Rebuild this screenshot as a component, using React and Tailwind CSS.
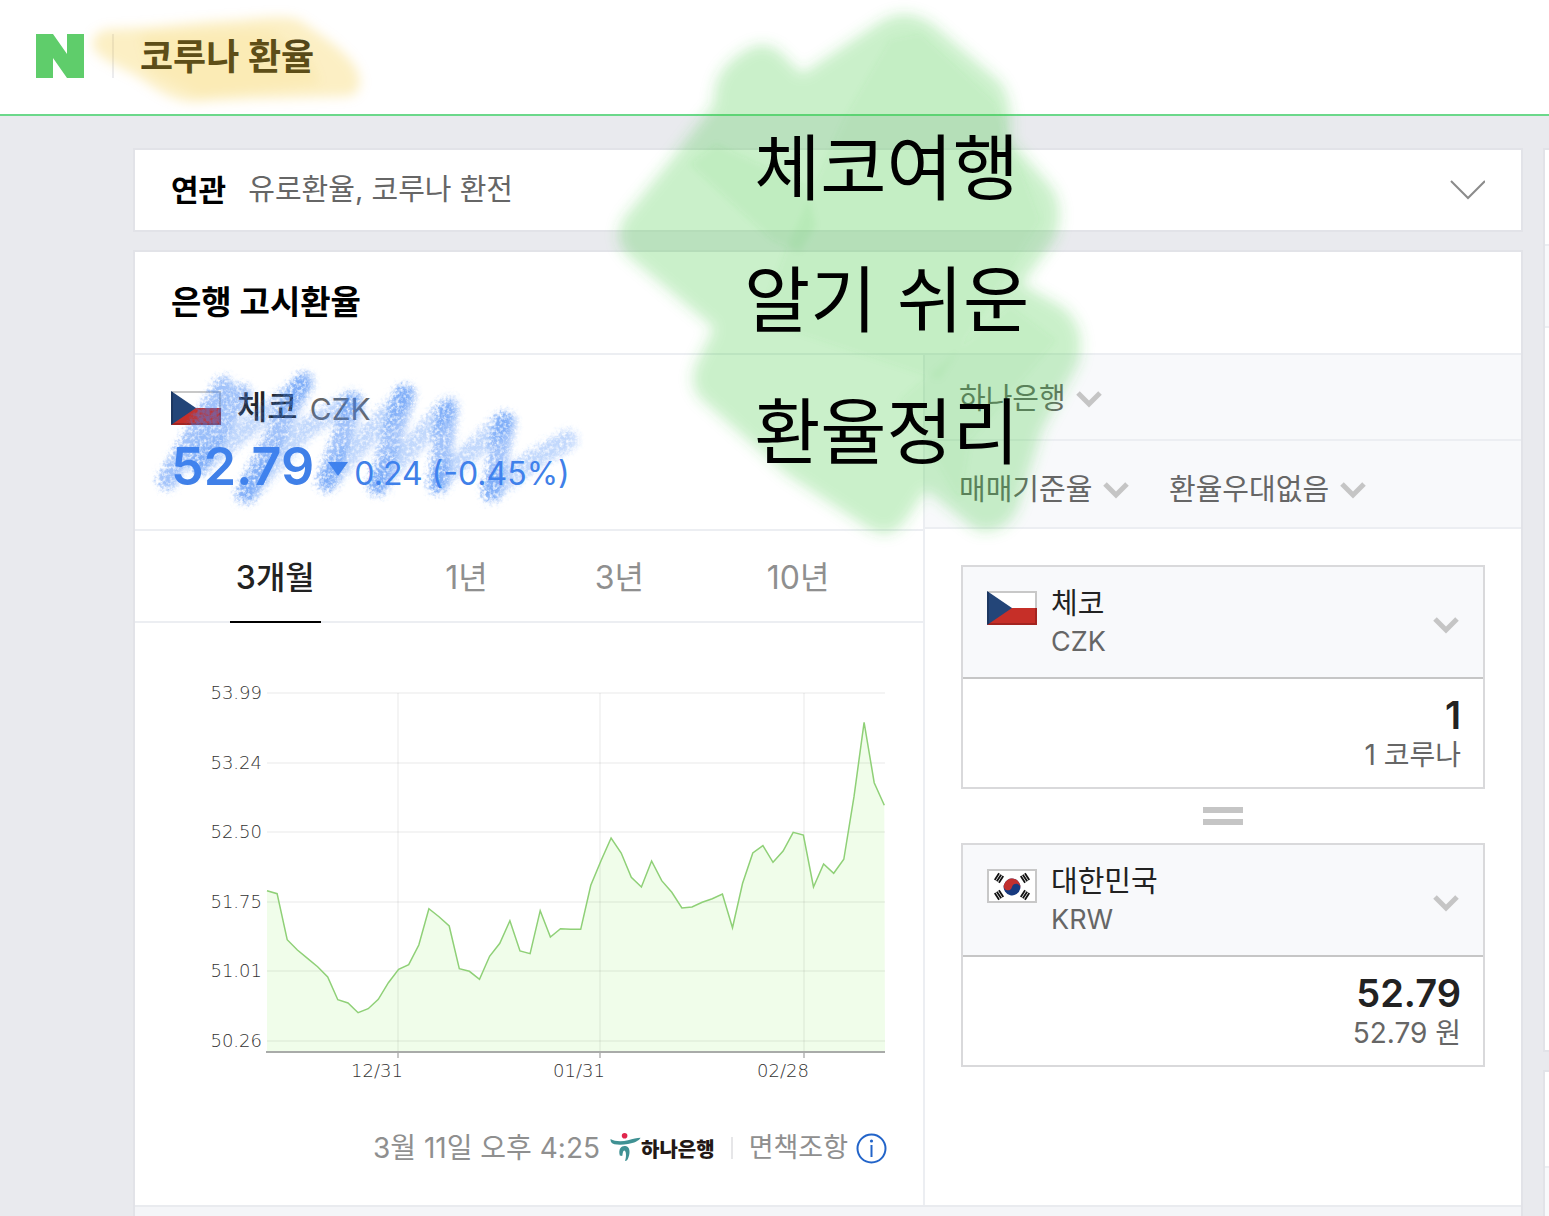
import React from "react";

const LEVELS = [
  662, 671, 809, 840, 865, 890, 921, 989, 999, 1028, 1016, 988, 938, 898, 884, 825, 716, 740, 768, 896, 904,
  928, 859, 820, 752, 843, 851, 722, 801, 776, 778, 778, 646, 572, 504, 549, 622, 651, 573, 632, 667, 714,
  711, 697, 686, 672, 773, 640, 549, 527, 577, 543, 487, 495, 651, 582, 610, 568, 380, 157, 338, 406,
];
const POINTS = LEVELS.map((v, i) => [132 + i * 10.12, 47 + v / 3]);
const LINE = POINTS.map(([x, y]) => `${x.toFixed(1)},${y.toFixed(1)}`).join(" ");

const Y_TICKS = [
  ["53.99", 70],
  ["53.24", 140],
  ["52.50", 209],
  ["51.75", 279],
  ["51.01", 348],
  ["50.26", 418],
];
const X_TICKS = [
  ["12/31", 263],
  ["01/31", 465],
  ["02/28", 669],
];

function NaverLogo() {
  return (
    <svg width="48" height="44" viewBox="0 0 48 44" aria-hidden="true">
      <polygon points="0,0 17,0 31,20 31,0 48,0 48,44 31,44 17,24 17,44 0,44" fill="#5fcd6b" />
    </svg>
  );
}

function Chevron() {
  return (
    <svg width="26" height="17" viewBox="0 0 26 17" aria-hidden="true" className="shrink-0">
      <path d="M2 2 L13 13 L24 2" fill="none" stroke="#c5c5c5" strokeWidth="5" />
    </svg>
  );
}

function CzechFlag() {
  return (
    <svg width="50" height="34" viewBox="0 0 50 34" role="img" aria-label="체코 국기" className="shrink-0">
      <rect width="50" height="34" fill="#fff" />
      <path d="M0 1H49V17" fill="none" stroke="#c8c8c8" strokeWidth="2" />
      <rect y="17" width="50" height="17" fill="#c62f28" />
      <path d="M0 33H49V17" fill="none" stroke="#a32420" strokeWidth="2" />
      <polygon points="0,0 25,17 0,34" fill="#234578" />
      <path d="M1 1V33" stroke="#1c3761" strokeWidth="2" />
    </svg>
  );
}

function Trigram({ x, y, angle }) {
  return (
    <g transform={`translate(${x} ${y}) rotate(${angle})`}>
      <rect x="-4" y="-3.4" width="8" height="1.8" fill="#111" />
      <rect x="-4" y="-0.9" width="8" height="1.8" fill="#111" />
      <rect x="-4" y="1.6" width="8" height="1.8" fill="#111" />
    </g>
  );
}

function KoreaFlag() {
  return (
    <svg width="50" height="34" viewBox="0 0 50 34" role="img" aria-label="대한민국 국기" className="shrink-0">
      <rect x="1" y="1" width="48" height="32" fill="#fff" stroke="#c8c8c8" strokeWidth="2" />
      <g transform="rotate(12 25 18)">
        <circle cx="25" cy="18" r="8.4" fill="#173a80" />
        <path d="M16.6 18a8.4 8.4 0 0 1 16.8 0a4.2 4.2 0 0 0 -8.4 0a4.2 4.2 0 0 1 -8.4 0z" fill="#c2302f" />
      </g>
      <Trigram x={12} y={9} angle={-57} />
      <Trigram x={38} y={9} angle={57} />
      <Trigram x={12} y={26} angle={57} />
      <Trigram x={38} y={26} angle={-57} />
    </svg>
  );
}

function HanaMark() {
  return (
    <svg width="31" height="30" viewBox="0 0 31 30" aria-hidden="true" className="shrink-0">
      <circle cx="14.6" cy="2.8" r="2.8" fill="#e0254c" />
      <path
        d="M0.5 6 C5 8.6 12 8.6 18 7.2 C23 6 27 4.8 30.5 4.8 C29 8 24 10 18 11 C11 12.4 3 12 1.4 9.6 C0.7 8.6 0.4 7.4 0.5 6z"
        fill="#3f9193"
      />
      <path
        d="M9.8 22.5 C8 15 12 12.4 15.4 13 C20.5 14 20 20 18.6 24 C17.6 27 16.6 28 15 28 C16.4 24 16.4 18.6 14.6 17.4 C12.6 17.4 12.8 21 12.2 23z"
        fill="#3f9193"
      />
    </svg>
  );
}

function InlineSelect({ label, value }) {
  return (
    <div className="flex items-center gap-2.5">
      <select
        aria-label={label}
        className="h-14 appearance-none bg-transparent text-[29px] text-[#666]"
        defaultValue={value}
      >
        <option>{value}</option>
      </select>
      <Chevron />
    </div>
  );
}

function CurrencyBox({ flag, country, code, amount, unit }) {
  return (
    <div className="border-2 border-[#d9d9db]">
      <button
        type="button"
        className="flex h-28 w-full items-start border-b-2 border-[#c6c6c6] bg-[#f8f9fb] px-6 pt-4 text-left"
      >
        <span className="pt-2">{flag}</span>
        <span className="ml-3.5 flex flex-1 flex-col pt-0.5">
          <span className="text-[29px] leading-[38px] text-[#222]">{country}</span>
          <span className="text-[27px] leading-[38px] text-[#666]">{code}</span>
        </span>
        <span className="mt-[34px]">
          <Chevron />
        </span>
      </button>
      <div className="flex h-[108px] flex-col items-end px-[22px] pt-4">
        <input
          type="text"
          aria-label={`${country} 금액`}
          defaultValue={amount}
          className="w-full bg-transparent text-right text-[38px] leading-[40px] font-semibold text-[#222] outline-none"
        />
        <span className="text-[28px] leading-[40px] text-[#666]">{unit}</span>
      </div>
    </div>
  );
}

function RateChart() {
  return (
    <svg viewBox="0 0 788 480" className="block h-auto w-full" role="img" aria-label="3개월 환율 추이">
      <polygon points={`132,429 ${LINE} 750,429`} fill="#f0fdea" />
      <g stroke="#000" strokeOpacity="0.06" strokeWidth="1.5">
        {Y_TICKS.map(([t, y]) => (
          <path key={t} d={`M132 ${y}H750`} />
        ))}
        {X_TICKS.map(([t, x]) => (
          <path key={t} d={`M${x} 70V428`} />
        ))}
      </g>
      <polyline points={LINE} fill="none" stroke="#8fd077" strokeWidth="1.5" />
      <path d="M131 429H750" stroke="#a9aba9" strokeWidth="2" />
      <g stroke="#b5b5b5" strokeWidth="1.5">
        {X_TICKS.map(([t, x]) => (
          <path key={t} d={`M${x} 430V435`} />
        ))}
      </g>
      <g fill="#333" fontFamily='"DejaVu Sans Light", "DejaVu Sans", sans-serif' fontWeight="200" fontSize="18">
        {Y_TICKS.map(([t, y]) => (
          <text key={t} x="127" y={y + 6} textAnchor="end">
            {t}
          </text>
        ))}
        {X_TICKS.map(([t, x]) => (
          <text key={t} x={x - 21} y="454" textAnchor="middle">
            {t}
          </text>
        ))}
      </g>
    </svg>
  );
}

function YellowMarker() {
  return (
    <svg
      width="400"
      height="120"
      viewBox="0 0 400 120"
      aria-hidden="true"
      className="pointer-events-none absolute top-0 left-0"
    >
      <filter id="soft-yellow" x="-10%" y="-20%" width="120%" height="140%">
        <feGaussianBlur stdDeviation="6" />
      </filter>
      <g filter="url(#soft-yellow)" fill="#f1bb03">
        <path
          fillOpacity="0.23"
          d="M92 44 Q94 30 112 29 C150 29 190 22 240 20 C270 17 292 15 302 22 C325 38 345 50 356 68 Q366 90 350 96 C310 98 250 98 196 102 C175 102 160 92 140 78 C122 66 96 60 92 44z"
        />
        <path fillOpacity="0.08" d="M140 34 L270 30 L310 60 L320 84 L200 96 L150 70z" />
      </g>
    </svg>
  );
}

function GreenMarker() {
  return (
    <svg
      width="500"
      height="550"
      viewBox="600 0 500 550"
      aria-hidden="true"
      className="pointer-events-none absolute top-0 left-[600px]"
    >
      <filter id="soft-green">
        <feGaussianBlur stdDeviation="7" />
      </filter>
      <filter id="soft-green-inner">
        <feGaussianBlur stdDeviation="3" />
      </filter>
      <path
        fill="#3ec73e"
        fillOpacity="0.27"
        filter="url(#soft-green)"
        d="M880 22 Q905 6 932 24 L1000 82 Q1014 102 1010 140 L1052 188 Q1066 212 1054 240 L1022 284 L1064 308 Q1088 330 1078 364 L1042 430 L1018 508 Q1005 536 976 530 L926 490 L906 520 Q890 542 868 528 L786 474 L700 398 Q688 384 696 364 L714 328 L628 256 Q612 240 624 218 L674 156 L714 104 Q712 72 740 54 Q764 36 782 54 L802 74z"
      />
      <g filter="url(#soft-green-inner)" fill="#3ec73e">
        <path fillOpacity="0.07" d="M716 144 L806 186 L816 226 L800 252 L772 240 L690 164z" />
        <path fillOpacity="0.05" d="M890 40 L920 34 L996 104 L1040 220 L940 380 L760 320 L790 240 L846 116z" />
        <path fillOpacity="0.05" d="M1010 306 L1056 340 L970 440 L960 500 L900 400z" />
      </g>
    </svg>
  );
}

function BlueCrayon() {
  return (
    <svg
      width="480"
      height="180"
      viewBox="130 350 480 180"
      aria-hidden="true"
      className="pointer-events-none absolute top-[350px] left-[130px]"
    >
      <filter id="crayon" x="-10%" y="-20%" width="120%" height="140%">
        <feTurbulence type="fractalNoise" baseFrequency="0.3" numOctaves="3" seed="4" result="grain" />
        <feColorMatrix in="grain" type="matrix" values="0 0 0 0 0  0 0 0 0 0  0 0 0 0 0  2 0 0 0 -0.15" result="mask" />
        <feGaussianBlur in="SourceGraphic" stdDeviation="3" result="soft" />
        <feDisplacementMap in="soft" in2="grain" scale="12" xChannelSelector="R" yChannelSelector="G" result="rough" />
        <feComposite in="rough" in2="mask" operator="in" />
      </filter>
      <g filter="url(#crayon)" fill="none" stroke="#3f86f5" strokeLinecap="round" strokeLinejoin="round">
        <g strokeWidth="20" strokeOpacity="0.32">
          <path d="M200 466 L301 386" />
          <path d="M250 490 L304 430 L352 400" />
          <path d="M331 478 L404 396" />
          <path d="M380 482 L449 406" />
          <path d="M440 480 L504 422" />
          <path d="M494 488 L534 460 L568 440" />
        </g>
        <g strokeWidth="20" strokeOpacity="0.5">
          <path d="M168 480 L224 386" />
          <path d="M242 394 L200 462" />
          <path d="M304 382 L246 494" />
          <path d="M354 404 L327 482" />
          <path d="M406 394 L378 486" />
          <path d="M448 412 L438 484" />
          <path d="M506 422 L492 492" />
        </g>
      </g>
    </svg>
  );
}

const TABS = ["3개월", "1년", "3년", "10년"];

export default function App() {
  return (
    <div
      className="relative flex min-h-screen flex-col overflow-hidden bg-[#e9eaee] font-['Inter','Noto_Sans_CJK_KR',sans-serif] text-[#222]"
      lang="ko"
    >
      <header className="flex h-29 items-center border-b-2 border-[#6bd88a] bg-white px-9 pb-0.5">
        <a href="#home" aria-label="NAVER">
          <NaverLogo />
        </a>
        <span className="ml-7 h-11 w-0.5 bg-[#ececef]" />
        <h1 className="ml-[26px] pt-0.5 text-4xl leading-[52px] font-bold">코루나 환율</h1>
      </header>

      <div className="flex flex-1 gap-5 pt-8 pl-[133px]">
        <main className="flex min-w-0 flex-1 flex-col gap-[18px]">
          <section className="flex h-21 items-center border-2 border-[#e2e3e8] bg-white px-9">
            <h2 className="text-3xl leading-[40px] font-bold text-black">연관</h2>
            <p className="ml-[22px] flex-1 text-[29px] leading-[40px] text-[#666]">
              <a href="#euro">유로환율</a>, <a href="#exchange">코루나 환전</a>
            </p>
            <button type="button" aria-label="연관 검색어 펼치기">
              <svg width="36" height="20" viewBox="0 0 36 20" aria-hidden="true">
                <path d="M2 1 L19 18 L36 1" fill="none" stroke="#8b8b8b" strokeWidth="2" />
              </svg>
            </button>
          </section>

          <section className="flex flex-1 flex-col border-2 border-b-0 border-[#e2e3e8] bg-white">
            <h2 className="flex h-[103px] items-center border-b-2 border-[#eceef2] px-9 text-[33px] font-bold text-black">
              은행 고시환율
            </h2>
            <div className="grid grid-cols-[790fr_596fr]">
              <div className="border-r-2 border-[#eceef2]">
                <div className="h-44 border-b-2 border-[#eceef2] px-9 pt-7">
                  <div className="flex h-[50px] items-center">
                    <CzechFlag />
                    <strong className="ml-4 text-[33px] font-medium">체코</strong>
                    <span className="ml-3 pt-0.5 text-[30px] text-[#666]">CZK</span>
                  </div>
                  <div className="flex items-baseline pt-0.5 text-[#4080e8]">
                    <strong className="text-[52px] leading-[64px] font-semibold">52.79</strong>
                    <svg width="20" height="24" viewBox="0 0 20 24" aria-label="하락" className="ml-3.5 shrink-0">
                      <polygon points="0,1 20,1 10,15" fill="#4080e8" />
                    </svg>
                    <span className="ml-1.5 text-[32px]">0.24 (-0.45%)</span>
                  </div>
                </div>

                <div
                  role="tablist"
                  className="grid h-23 grid-cols-[233fr_150fr_156fr_202fr] justify-items-center border-b-2 border-[#eceef2] px-6"
                >
                  {TABS.map((t, i) => (
                    <button
                      key={t}
                      type="button"
                      role="tab"
                      aria-selected={i === 0}
                      className={
                        i === 0
                          ? "-mb-0.5 border-b-2 border-black px-1.5 pt-1 text-[32px] font-medium"
                          : "-mb-0.5 border-b-2 border-transparent px-1.5 pt-1 text-[32px] text-[#8f8f8f]"
                      }
                    >
                      {t}
                    </button>
                  ))}
                </div>

                <RateChart />

                <div className="flex h-[102px] items-center justify-end pr-9 pb-3 text-[28px] text-[#8f8f8f]">
                  <span>3월 11일 오후 4:25</span>
                  <a href="#hana" className="ml-2.5 flex items-center text-xl font-black text-[#231815]">
                    <HanaMark />
                    <span className="pt-1">하나은행</span>
                  </a>
                  <span className="mx-4 h-[22px] w-0.5 bg-[#e6e6e8]" />
                  <a href="#terms" className="flex items-center gap-2 text-[27px]">
                    면책조항
                    <svg width="31" height="31" viewBox="0 0 31 31" fill="none" stroke="#2264c9" aria-hidden="true">
                      <circle cx="15.5" cy="15.5" r="14" strokeWidth="2" />
                      <path d="M15.5 12V24" strokeWidth="2" />
                      <circle cx="15.5" cy="8" r="1.6" fill="#2264c9" stroke="none" />
                    </svg>
                  </a>
                </div>
              </div>

              <div>
                <div className="flex h-[86px] items-center border-b-2 border-[#eceef2] bg-[#f8f9fb] pt-1 pl-[34px]">
                  <InlineSelect label="은행" value="하나은행" />
                </div>
                <div className="flex h-22 items-center gap-10 border-b-2 border-[#eceef2] bg-[#f8f9fb] pt-3 pl-[34px]">
                  <InlineSelect label="환율 기준" value="매매기준율" />
                  <InlineSelect label="환율 우대" value="환율우대없음" />
                </div>
                <div className="p-9">
                  <CurrencyBox flag={<CzechFlag />} country="체코" code="CZK" amount="1" unit="1 코루나" />
                  <div className="flex h-[54px] flex-col items-center justify-center gap-1.5" aria-hidden="true">
                    <span className="h-1.5 w-10 bg-[#c5c5c5]" />
                    <span className="h-1.5 w-10 bg-[#c5c5c5]" />
                  </div>
                  <CurrencyBox flag={<KoreaFlag />} country="대한민국" code="KRW" amount="52.79" unit="52.79 원" />
                </div>
              </div>
            </div>
            <div className="min-h-2 flex-1 border-t-2 border-[#e9ebef] bg-[#f4f5f8]" />
          </section>
        </main>

        <aside className="flex w-1.5 flex-col gap-[18px]">
          <div className="h-[904px] border-2 border-r-0 border-[#e2e3e8] bg-white pt-[94px]">
            <div className="h-21 border-y-2 border-[#eceef2] bg-[#f8f9fb]" />
          </div>
          <div className="flex-1 border-2 border-r-0 border-b-0 border-[#e2e3e8] bg-white pt-[94px]">
            <div className="h-full border-t-2 border-[#eceef2] bg-[#f8f9fb]" />
          </div>
        </aside>
      </div>

      <YellowMarker />
      <GreenMarker />
      <BlueCrayon />
      <p className="pointer-events-none absolute top-[102px] left-[744px] text-center text-7xl leading-[132px] whitespace-nowrap text-black">
        체코여행
        <br />
        알기 쉬운
        <br />
        환율정리
      </p>
    </div>
  );
}
